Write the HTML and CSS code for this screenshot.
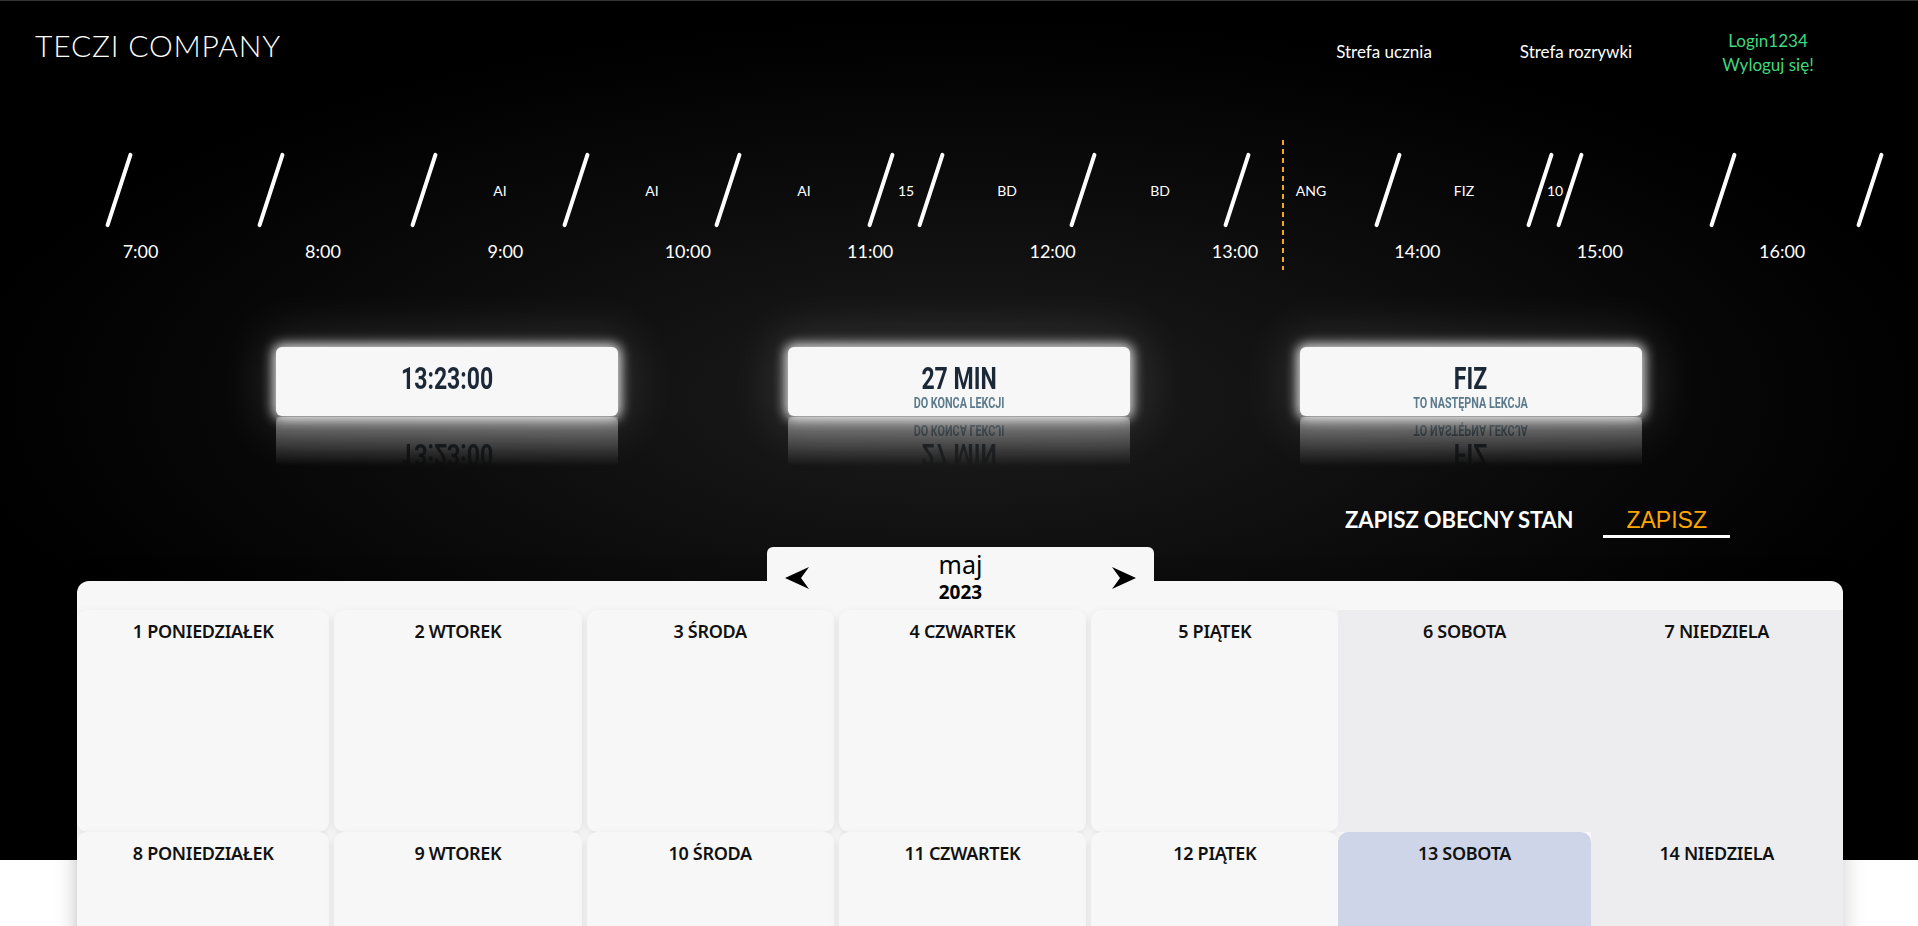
FILE: index.html
```html
<!DOCTYPE html>
<html lang="pl">
<head>
<meta charset="utf-8">
<title>Teczi Company</title>
<link rel="stylesheet" href="styles.css">
</head>
<body>
<div class="hero">
  <header class="topbar">
    <div class="logo">TECZI COMPANY</div>
    <nav class="nav">
      <a class="nav-link">Strefa ucznia</a>
      <a class="nav-link">Strefa rozrywki</a>
      <div class="user"><span>Login1234</span><span>Wyloguj się!</span></div>
    </nav>
  </header>

  <section class="timeline">
    <div class="slash" style="left:119px"></div>
    <div class="slash" style="left:271px"></div>
    <div class="slash" style="left:424px"></div>
    <div class="slash" style="left:576px"></div>
    <div class="slash" style="left:728px"></div>
    <div class="slash" style="left:880.6px"></div>
    <div class="slash" style="left:931px"></div>
    <div class="slash" style="left:1083px"></div>
    <div class="slash" style="left:1236.6px"></div>
    <div class="slash" style="left:1388px"></div>
    <div class="slash" style="left:1540px"></div>
    <div class="slash" style="left:1570px"></div>
    <div class="slash" style="left:1723px"></div>
    <div class="slash" style="left:1870px"></div>

    <span class="lesson" style="left:500px">AI</span>
    <span class="lesson" style="left:652px">AI</span>
    <span class="lesson" style="left:804px">AI</span>
    <span class="lesson" style="left:906px">15</span>
    <span class="lesson" style="left:1007px">BD</span>
    <span class="lesson" style="left:1160px">BD</span>
    <span class="lesson" style="left:1311px">ANG</span>
    <span class="lesson" style="left:1464px">FIZ</span>
    <span class="lesson" style="left:1555px">10</span>

    <span class="hour" style="left:140.6px">7:00</span>
    <span class="hour" style="left:323px">8:00</span>
    <span class="hour" style="left:505.4px">9:00</span>
    <span class="hour" style="left:687.8px">10:00</span>
    <span class="hour" style="left:870.2px">11:00</span>
    <span class="hour" style="left:1052.6px">12:00</span>
    <span class="hour" style="left:1235px">13:00</span>
    <span class="hour" style="left:1417.4px">14:00</span>
    <span class="hour" style="left:1599.8px">15:00</span>
    <span class="hour" style="left:1782.2px">16:00</span>

    <div class="now-line" style="left:1282px"></div>
  </section>

  <section class="cards">
    <div class="card">
      <div class="card-inner">
        <div class="card-main">13:23:00</div>
      </div>
    </div>
    <div class="card">
      <div class="card-inner">
        <div class="card-main">27 MIN</div>
        <div class="card-sub">DO KONCA LEKCJI</div>
      </div>
    </div>
    <div class="card">
      <div class="card-inner">
        <div class="card-main">FIZ</div>
        <div class="card-sub">TO NASTĘPNA LEKCJA</div>
      </div>
    </div>
  </section>

  <section class="save-row">
    <span class="save-label">ZAPISZ OBECNY STAN</span>
    <button class="save-btn" type="button">ZAPISZ</button>
  </section>

  <section class="calendar">
    <div class="month-tab">
      <svg class="arrow" width="24" height="22" viewBox="0 0 24 22"><path d="M0 11 L24 0 L16 11 L24 22 Z" fill="#000"/></svg>
      <div class="month-title">
        <span class="month-name">maj</span>
        <span class="month-year">2023</span>
      </div>
      <svg class="arrow" width="24" height="22" viewBox="0 0 24 22"><path d="M24 11 L0 0 L8 11 L0 22 Z" fill="#000"/></svg>
    </div>
    <div class="cal-body">
      <div class="day">1 PONIEDZIAŁEK</div>
      <div class="day">2 WTOREK</div>
      <div class="day">3 ŚRODA</div>
      <div class="day">4 CZWARTEK</div>
      <div class="day">5 PIĄTEK</div>
      <div class="day weekend">6 SOBOTA</div>
      <div class="day weekend">7 NIEDZIELA</div>
      <div class="day">8 PONIEDZIAŁEK</div>
      <div class="day">9 WTOREK</div>
      <div class="day">10 ŚRODA</div>
      <div class="day">11 CZWARTEK</div>
      <div class="day">12 PIĄTEK</div>
      <div class="day weekend today">13 SOBOTA</div>
      <div class="day weekend">14 NIEDZIELA</div>
    </div>
  </section>
</div>
</body>
</html>
```
FILE: styles.css
```css
* { box-sizing: border-box; }
html, body { margin: 0; padding: 0; }
body {
  background: #fff;
  font-family: Lato, "Noto Sans", sans-serif;
}

.hero {
  padding-bottom: 60px;
  background:
    radial-gradient(ellipse 1000px 380px at 50% 400px, #1c1c1c 0%, #0c0c0c 55%, rgba(0,0,0,0) 100%) no-repeat,
    linear-gradient(to bottom, #000 0, #000 860px, #fff 860px, #fff 100%);
  box-shadow: inset 0 1px 0 #333;
}

/* header */
.topbar {
  display: flex;
  justify-content: space-between;
  align-items: flex-start;
  height: 130px;
  padding: 0 54px 0 35px;
}
.logo {
  margin-top: 27px;
  font-size: 30px;
  line-height: 36px;
  font-weight: 300;
  letter-spacing: 0.8px;
  color: #fff;
}
.nav { display: flex; align-items: flex-start; }
.nav-link {
  width: 192px;
  margin-top: 42px;
  text-align: center;
  color: #fff;
  font-size: 17px;
  line-height: 20px;
  text-decoration: none;
}
.user {
  width: 192px;
  margin-top: 29px;
  display: flex;
  flex-direction: column;
  align-items: center;
  color: #3fd97f;
  font-size: 17px;
  line-height: 24px;
}

/* timeline */
.timeline {
  position: relative;
  height: 150px;
}
.slash {
  position: absolute;
  top: 21px;
  width: 4px;
  height: 78px;
  margin-left: -2px;
  background: #fff;
  border-radius: 2px;
  transform: rotate(18deg);
}
.lesson {
  position: absolute;
  top: 53px;
  transform: translateX(-50%);
  font-size: 14px;
  line-height: 16px;
  color: #fff;
}
.hour {
  position: absolute;
  top: 111px;
  transform: translateX(-50%);
  font-size: 18px;
  line-height: 20px;
  color: #fff;
}
.now-line {
  position: absolute;
  top: 10px;
  width: 2px;
  height: 130px;
  background: repeating-linear-gradient(to bottom, #f5a623 0 5px, transparent 5px 9px);
}

/* cards */
.cards {
  display: flex;
  justify-content: center;
  gap: 170px;
  margin-top: 67px;
}
.card {
  width: 342px;
  height: 69px;
  padding-top: 15px;
  background: #f7f7f7;
  border-radius: 6px;
  text-align: center;
  box-shadow: 0 0 12px 3px rgba(255,255,255,0.85), 0 0 50px 14px rgba(255,255,255,0.12);
  -webkit-box-reflect: below 1px linear-gradient(transparent 30%, rgba(255,255,255,0.45));
}
.card-inner {
  display: inline-block;
  transform: scaleX(0.72);
  font-family: Roboto, sans-serif;
}
.card-main {
  font-size: 32px;
  line-height: 33px;
  font-weight: 700;
  color: #1b2838;
}
.card-sub {
  font-size: 15px;
  line-height: 16px;
  font-weight: 700;
  color: #5b7b8d;
}

/* save */
.save-row {
  display: flex;
  justify-content: flex-end;
  align-items: flex-start;
  gap: 30px;
  padding-right: 188px;
  margin-top: 91px;
}
.save-label {
  font-size: 22px;
  line-height: 26px;
  font-weight: 700;
  letter-spacing: -0.1px;
  color: #fff;
}
.save-btn {
  font-family: "Liberation Sans", Arial, sans-serif;
  font-size: 23px;
  line-height: 26px;
  color: #ffa500;
  background: none;
  border: 0;
  border-bottom: 3px solid #fff;
  padding: 0 23px 2px;
  margin: 0;
}

/* calendar */
.calendar {
  margin: 9px 75px 0 77px;
}
.month-tab {
  position: relative;
  z-index: 1;
  width: 387px;
  height: 57px;
  margin: 0 auto -23px;
  padding: 0 17px 0 18px;
  background: #f7f7f7;
  border-radius: 6px 6px 0 0;
  display: flex;
  justify-content: space-between;
  align-items: flex-start;
}
.arrow { margin-top: 20px; display: block; }
.month-title {
  display: flex;
  flex-direction: column;
  align-items: center;
  margin-top: 3px;
  font-family: "Noto Sans", sans-serif;
  color: #000;
}
.month-name { font-size: 25px; line-height: 28px; }
.month-year { font-size: 19px; line-height: 20px; font-weight: 700; margin-top: 4px; }

.cal-body {
  background: #f7f7f7;
  border-radius: 12px;
  padding-top: 29px;
  box-shadow: 0 0 25px rgba(0,0,0,0.2);
  display: grid;
  grid-template-columns: repeat(7, 1fr);
  grid-auto-rows: 222px;
}
.day {
  margin-left: 5px;
  padding-top: 10px;
  background: #f7f7f7;
  border-radius: 10px;
  box-shadow: 0 3px 10px rgba(0,0,0,0.09);
  text-align: center;
  font-family: "Noto Sans", sans-serif;
  font-weight: 600;
  font-size: 18px;
  line-height: 22px;
  letter-spacing: -0.3px;
  color: #111;
}
.day:nth-child(7n+1) { margin-left: 0; }
.day.weekend {
  margin-left: 0;
  background: #ededef;
  border-radius: 0;
  box-shadow: none;
}
.day.today {
  background: #cfd5e9;
  border-radius: 10px 10px 0 0;
}
```
